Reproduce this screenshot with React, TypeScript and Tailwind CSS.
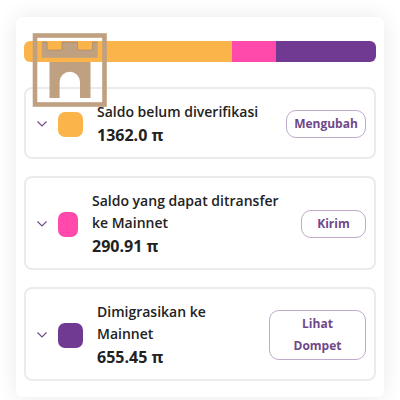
import React from "react";

const balances = [
  {
    label: "Saldo belum diverifikasi",
    amount: "1362.0",
    action: "Mengubah",
    swatch: "w-[25px] bg-[#fbb44a]",
    labelBox: "",
    button: "w-20",
  },
  {
    label: "Saldo yang dapat ditransfer ke Mainnet",
    amount: "290.91",
    action: "Kirim",
    swatch: "w-5 bg-[#ff4aab]",
    labelBox: "max-w-[198px]",
    button: "w-[65px]",
  },
  {
    label: "Dimigrasikan ke Mainnet",
    amount: "655.45",
    action: "Lihat Dompet",
    swatch: "w-[25px] bg-[#703a92]",
    labelBox: "max-w-36",
    button: "w-[97px] px-5",
  },
];

const CastleLogo = () => (
  <svg
    viewBox="0 0 75 74"
    className="absolute top-4 left-4 w-[75px] h-[74px]"
    aria-hidden="true"
  >
    <rect x="3" y="2.5" width="69.5" height="69" fill="none" stroke="#bfa181" strokeWidth="4.6" />
    <path
      d="M9.7 8.7H15V17H30V8.7H45.6V17H60.3V8.7H65.6V24.7H9.7Z"
      fill="#bfa181"
    />
    <path d="M10 9.2H15.2V17H30V9.2H45.6V17H60.5V9.2H65.5" fill="none" stroke="#a18560" strokeWidth="0.6" />
    <path
      d="M17.5 29H58.5V65H48V49A10.2 10.2 0 0 0 27.6 49V65H17.5Z"
      fill="#bfa181"
    />
  </svg>
);

const Chevron = () => (
  <svg viewBox="0 0 10 6" className="w-[10px] h-[6px]" aria-hidden="true">
    <path d="M0.5 0.5L5 5L9.5 0.5" fill="none" stroke="#70488a" strokeWidth="1.1" />
  </svg>
);

const App = () => {
  return (
    <div className="min-h-screen bg-white px-4 pt-[17px] font-['Open_Sans',sans-serif] text-[#222222]">
      <main className="relative rounded-md bg-white px-2 pt-6 pb-4 shadow-[0_0_22px_rgba(0,0,0,0.09)]">
        <div className="flex h-[21px] overflow-hidden rounded-md">
          <div className="w-[59%] bg-[#fbb44a]" />
          <div className="w-[12.6%] bg-[#ff4aab]" />
          <div className="flex-1 bg-[#703a92]" />
        </div>

        <ul className="mt-[25px] flex flex-col gap-[17px]">
          {balances.map((item) => (
            <li
              key={item.label}
              className="flex items-center rounded-lg border-2 border-[#ebebeb] pt-3 pb-[10px] pr-2 pl-[11px]"
            >
              <button type="button" aria-label={`Detail ${item.label}`}>
                <Chevron />
              </button>
              <span className={`ml-[11px] h-[25px] shrink-0 rounded-[7px] ${item.swatch}`} />
              <div className="ml-[14px] min-w-0 flex-1">
                <p className={`text-[14px] leading-[22px] font-semibold ${item.labelBox}`}>
                  {item.label}
                </p>
                <p className="text-[16px] leading-6 font-bold">{item.amount} π</p>
              </div>
              <button
                type="button"
                className={`shrink-0 rounded-[10px] border border-[#c0a9cb] py-[2px] text-[12px] leading-[22px] font-bold text-[#70488a] ${item.button}`}
              >
                {item.action}
              </button>
            </li>
          ))}
        </ul>
        <CastleLogo />
      </main>
    </div>
  );
};

export default App;
